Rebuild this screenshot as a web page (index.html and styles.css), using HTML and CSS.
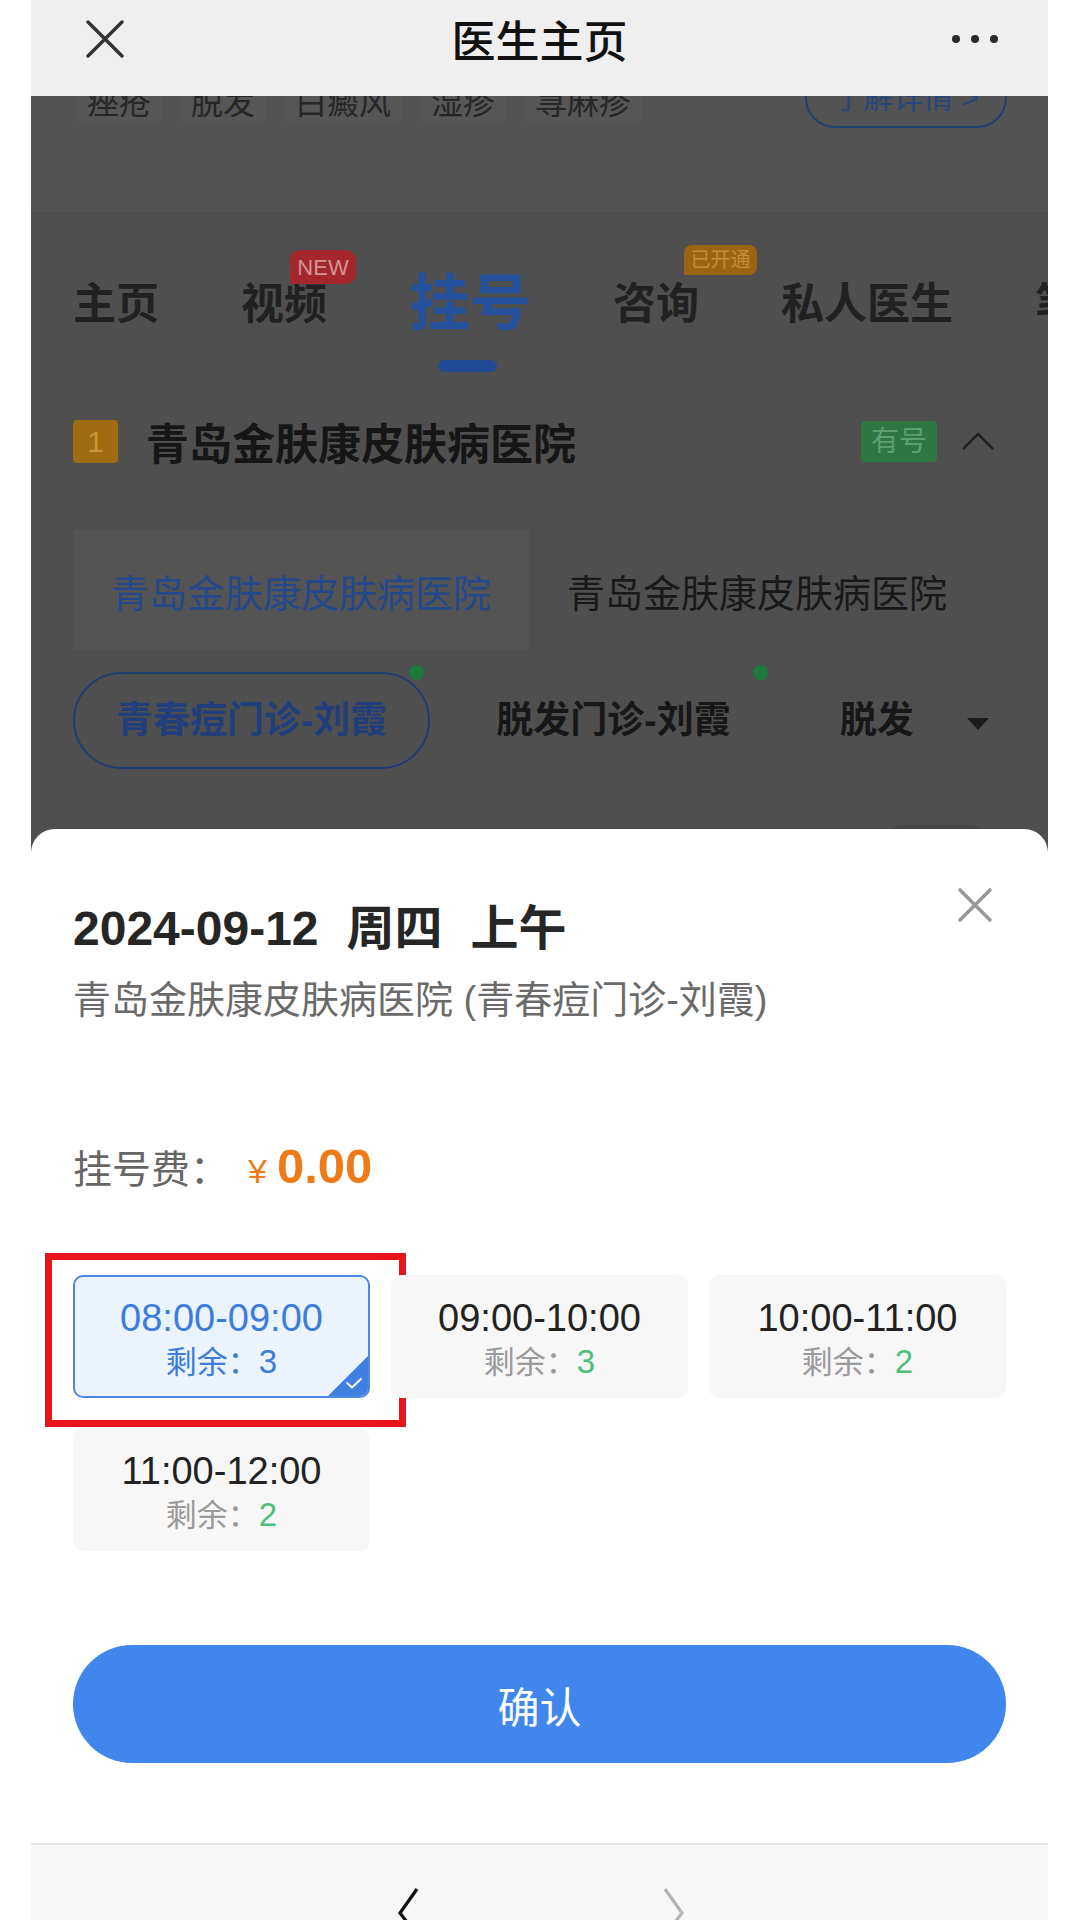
FILE: index.html
```html
<!DOCTYPE html>
<html lang="zh-CN">
<head>
  <meta charset="UTF-8">
  <meta name="viewport" content="width=device-width, initial-scale=1.0">
  <title>医生主页</title>
  <link rel="stylesheet" href="styles.css">
</head>
<body>
  <div class="phone">
    <header class="navbar">
      <svg class="nav-close" width="38" height="38" viewBox="0 0 38 38">
        <path d="M2 2 L36 36 M36 2 L2 36" stroke="#333" stroke-width="3.4" stroke-linecap="round"/>
      </svg>
      <div class="nav-title">医生主页</div>
      <div class="nav-more"><i></i><i></i><i></i></div>
    </header>

    <main class="page">
      <div class="doctor-card">
        <div class="tag-row">
          <span class="tag">痤疮</span>
          <span class="tag">脱发</span>
          <span class="tag">白癜风</span>
          <span class="tag">湿疹</span>
          <span class="tag">荨麻疹</span>
          <span class="detail-btn">了解详情 &gt;</span>
        </div>
      </div>

      <nav class="tabs">
        <span class="tab">主页</span>
        <span class="tab">视频<em class="badge badge-new">NEW</em></span>
        <span class="tab active">挂号</span>
        <span class="tab">咨询<em class="badge badge-open">已开通</em></span>
        <span class="tab">私人医生</span>
        <span class="tab">笔记</span>
      </nav>

      <div class="hosp-head">
        <span class="hosp-num">1</span>
        <span class="hosp-name">青岛金肤康皮肤病医院</span>
        <span class="has-num">有号</span>
        <svg class="hosp-toggle" width="34" height="20" viewBox="0 0 34 20">
          <path d="M2 18 L17 3 L32 18" fill="none" stroke="#1c1c1c" stroke-width="2.4"/>
        </svg>
      </div>

      <div class="hosp-tabs">
        <div class="hosp-tab active">青岛金肤康皮肤病医院</div>
        <div class="hosp-tab">青岛金肤康皮肤病医院</div>
      </div>

      <div class="dept-row">
        <span class="dept active">青春痘门诊-刘霞<i class="dot"></i></span>
        <span class="dept">脱发门诊-刘霞<i class="dot"></i></span>
        <span class="dept">脱发</span>
        <span class="dept-more"></span>
      </div>

      <div class="date-row"><span class="date-pill"></span></div>

      <section class="sheet">
        <svg class="sheet-close" width="36" height="36" viewBox="0 0 36 36">
          <path d="M3 3 L33 33 M33 3 L3 33" stroke="#999" stroke-width="3.6" stroke-linecap="round"/>
        </svg>
        <h2 class="sheet-title">2024-09-12<span class="sp">周四</span><span class="sp">上午</span></h2>
        <p class="sheet-sub">青岛金肤康皮肤病医院 (青春痘门诊-刘霞)</p>

        <div class="fee">
          <span class="fee-label">挂号费：</span>
          <span class="fee-yen">¥</span>
          <span class="fee-num">0.00</span>
        </div>

        <div class="slots">
          <div class="slot active">
            <div class="slot-time">08:00-09:00</div>
            <div class="slot-left">剩余：<b>3</b></div>
            <span class="slot-check">
              <svg width="18" height="12" viewBox="0 0 18 12"><path d="M1.5 5.5 L7 10.5 L16.5 1.5" fill="none" stroke="#fff" stroke-width="2"/></svg>
            </span>
            <div class="mark"></div>
          </div>
          <div class="slot">
            <div class="slot-time">09:00-10:00</div>
            <div class="slot-left">剩余：<b>3</b></div>
          </div>
          <div class="slot">
            <div class="slot-time">10:00-11:00</div>
            <div class="slot-left">剩余：<b>2</b></div>
          </div>
          <div class="slot">
            <div class="slot-time">11:00-12:00</div>
            <div class="slot-left">剩余：<b>2</b></div>
          </div>
        </div>

        <button class="confirm">确认</button>
      </section>
    </main>

    <footer class="bottom-bar">
      <svg width="26" height="48" viewBox="0 0 26 48">
        <path d="M22 2 L5 26 L22 48" fill="none" stroke="#111" stroke-width="3.2"/>
      </svg>
      <svg width="26" height="48" viewBox="0 0 26 48">
        <path d="M4 2 L21 26 L4 48" fill="none" stroke="#b5b5b5" stroke-width="3.2"/>
      </svg>
    </footer>
  </div>
</body>
</html>
```

FILE: styles.css
```css
body {
  margin: 0;
  background: #fff;
  font-family: 'Liberation Sans', 'Noto Sans CJK SC', sans-serif;
  color: #222;
}
.phone {
  width: 1017px;
  height: 1920px;
  margin-left: 31px;
  display: flex;
  flex-direction: column;
  overflow: hidden;
}

/* top navigation */
.navbar {
  height: 96px;
  flex-shrink: 0;
  background: #efefef;
  display: grid;
  grid-template-columns: 1fr auto 1fr;
  align-items: center;
  padding-bottom: 18px;
  box-sizing: border-box;
  position: relative;
  z-index: 2;
}
.nav-close {
  justify-self: start;
  margin-left: 55px;
}
.nav-title {
  font-size: 44px;
  font-weight: 500;
  color: #111;
}
.nav-more {
  justify-self: end;
  display: flex;
  gap: 11px;
  margin-right: 50px;
}
.nav-more i {
  width: 8px;
  height: 8px;
  border-radius: 50%;
  background: #2a2a2a;
}

/* dimmed page under the sheet */
.page {
  flex: 1;
  position: relative;
  overflow: hidden;
  background: #4f4f4f;
}
.doctor-card {
  display: flow-root;
  height: 117px;
  background: #535353;
  border-bottom: 1px solid #4b4b4b;
  box-sizing: border-box;
}
.tag-row {
  display: flex;
  align-items: flex-end;
  gap: 18px;
  margin-top: -28px;
  padding: 0 41px 0 45px;
  height: 60px;
}
.tag {
  font-size: 32px;
  line-height: 40px;
  padding: 0 11px;
  margin-bottom: 5px;
  background: #565656;
  color: #262626;
}
.detail-btn {
  margin-left: auto;
  height: 60px;
  line-height: 56px;
  box-sizing: border-box;
  padding: 0 26px;
  border: 2px solid #22406e;
  border-radius: 30px;
  font-size: 30px;
  color: #27467a;
}

.tabs {
  height: 180px;
  box-sizing: border-box;
  padding: 60px 0 0 42px;
  display: flex;
  gap: 82px;
  white-space: nowrap;
}
.tab {
  position: relative;
  height: 62px;
  line-height: 62px;
  font-size: 43px;
  font-weight: 700;
  color: #212121;
}
.tab.active {
  font-size: 61px;
  color: #24509c;
}
.tab.active::after {
  content: '';
  position: absolute;
  left: 50%;
  bottom: -37px;
  width: 59px;
  height: 12px;
  margin-left: -32px;
  border-radius: 6px;
  background: #1f4a95;
}
.badge {
  position: absolute;
  font-style: normal;
  font-weight: 400;
  text-align: center;
}
.badge-new {
  left: 49px;
  top: -23px;
  width: 66px;
  height: 34px;
  line-height: 36px;
  font-size: 22px;
  border-radius: 10px 10px 10px 2px;
  background: #a3272c;
  color: #d49497;
}
.badge-open {
  left: 71px;
  top: -28px;
  width: 73px;
  height: 30px;
  line-height: 30px;
  font-size: 20px;
  border-radius: 8px 8px 8px 2px;
  background: #9b6412;
  color: #c48c3c;
}

.hosp-head {
  height: 96px;
  display: flex;
  align-items: center;
  padding: 0 53px 0 42px;
}
.hosp-num {
  width: 45px;
  height: 43px;
  line-height: 43px;
  text-align: center;
  border-radius: 4px;
  background: #9f6c11;
  color: #c99638;
  font-size: 30px;
}
.hosp-name {
  margin-left: 28px;
  font-size: 43px;
  font-weight: 700;
  color: #161616;
}
.has-num {
  margin-left: auto;
  width: 76px;
  height: 41px;
  line-height: 41px;
  text-align: center;
  border-radius: 4px;
  background: #2e7743;
  color: #5e9e71;
  font-size: 28px;
}
.hosp-toggle {
  margin-left: 24px;
}

.hosp-tabs {
  margin-top: 41px;
  height: 120px;
  padding-left: 42px;
  display: flex;
}
.hosp-tab {
  width: 456px;
  flex-shrink: 0;
  display: flex;
  align-items: center;
  justify-content: center;
  font-size: 38px;
  color: #191919;
}
.hosp-tab.active {
  background: #545454;
  color: #23488c;
}

.dept-row {
  margin-top: 22px;
  height: 97px;
  padding-left: 42px;
  display: flex;
  align-items: center;
  gap: 23px;
}
.dept {
  position: relative;
  height: 97px;
  line-height: 93px;
  box-sizing: border-box;
  padding: 0 41px;
  border: 2px solid transparent;
  border-radius: 49px;
  font-size: 37px;
  font-weight: 700;
  color: #171717;
}
.dept.active {
  border-color: #1f3d73;
  color: #213f7c;
}
.dot {
  position: absolute;
  right: 4px;
  top: -9px;
  width: 15px;
  height: 15px;
  border-radius: 50%;
  background: #1c7a3b;
}
.dept-more {
  margin-left: -13px;
  margin-top: 6px;
  width: 0;
  height: 0;
  border-left: 11px solid transparent;
  border-right: 11px solid transparent;
  border-top: 12px solid #1b1b1b;
}
.date-row {
  margin-top: 56px;
  padding-right: 56px;
  display: flex;
  justify-content: flex-end;
}
.date-pill {
  width: 111px;
  height: 60px;
  border-radius: 24px;
  background: #444;
}

/* bottom sheet */
.sheet {
  position: absolute;
  left: 0;
  right: 0;
  bottom: 0;
  height: 1014px;
  box-sizing: border-box;
  padding: 70px 42px 0;
  background: #fff;
  border-radius: 24px 24px 0 0;
}
.sheet-close {
  position: absolute;
  top: 58px;
  right: 55px;
}
.sheet-title {
  margin: 0;
  font-size: 48px;
  line-height: 60px;
  font-weight: 700;
  color: #262626;
}
.sheet-title .sp {
  margin-left: 28px;
}
.sheet-sub {
  margin: 16px 0 0;
  font-size: 38px;
  line-height: 50px;
  color: #6a6a6a;
}
.fee {
  margin-top: 111px;
  height: 60px;
  display: flex;
  align-items: baseline;
  line-height: 60px;
}
.fee-label {
  font-size: 39px;
  color: #666;
}
.fee-yen {
  margin-left: 19px;
  font-size: 34px;
  color: #ee7b18;
}
.fee-num {
  margin-left: 10px;
  font-size: 49px;
  font-weight: 700;
  color: #ee7b18;
}

.slots {
  margin-top: 79px;
  display: grid;
  grid-template-columns: repeat(3, 297px);
  grid-auto-rows: 123px;
  gap: 30px 21px;
}
.slot {
  position: relative;
  border-radius: 10px;
  background: #f7f7f8;
  display: flex;
  flex-direction: column;
  align-items: center;
  justify-content: center;
  padding-top: 6px;
  box-sizing: border-box;
}
.slot-time {
  font-size: 38px;
  line-height: 44px;
  color: #222;
}
.slot-left {
  margin-top: 2px;
  font-size: 31px;
  line-height: 40px;
  color: #9a9a9a;
}
.slot-left b {
  font-weight: 400;
  font-size: 33px;
  color: #4cbf78;
}
.slot.active {
  border: 2px solid #4b88e2;
  background: #ebf3fe;
}
.slot.active .slot-time,
.slot.active .slot-left,
.slot.active .slot-left b {
  color: #3c7ddb;
}
.slot-check {
  position: absolute;
  right: 0;
  bottom: 0;
  width: 40px;
  height: 40px;
  background: #3f80e0;
  clip-path: polygon(100% 0, 100% 100%, 0 100%);
  border-bottom-right-radius: 8px;
}
.slot-check svg {
  position: absolute;
  right: 5px;
  bottom: 7px;
}
.mark {
  position: absolute;
  left: -30px;
  top: -24px;
  width: 361px;
  height: 174px;
  box-sizing: border-box;
  border: 7px solid #e8161c;
}

.confirm {
  display: block;
  width: 100%;
  height: 118px;
  margin-top: 94px;
  border: none;
  border-radius: 59px;
  background: #4086ec;
  color: #fff;
  font-family: inherit;
  font-size: 42px;
}

.bottom-bar {
  height: 77px;
  flex-shrink: 0;
  box-sizing: border-box;
  background: #f7f7f7;
  border-top: 2px solid #e6e6e6;
  display: flex;
  justify-content: center;
  align-items: flex-start;
  gap: 240px;
  padding: 42px 0 0 2px;
}
```
